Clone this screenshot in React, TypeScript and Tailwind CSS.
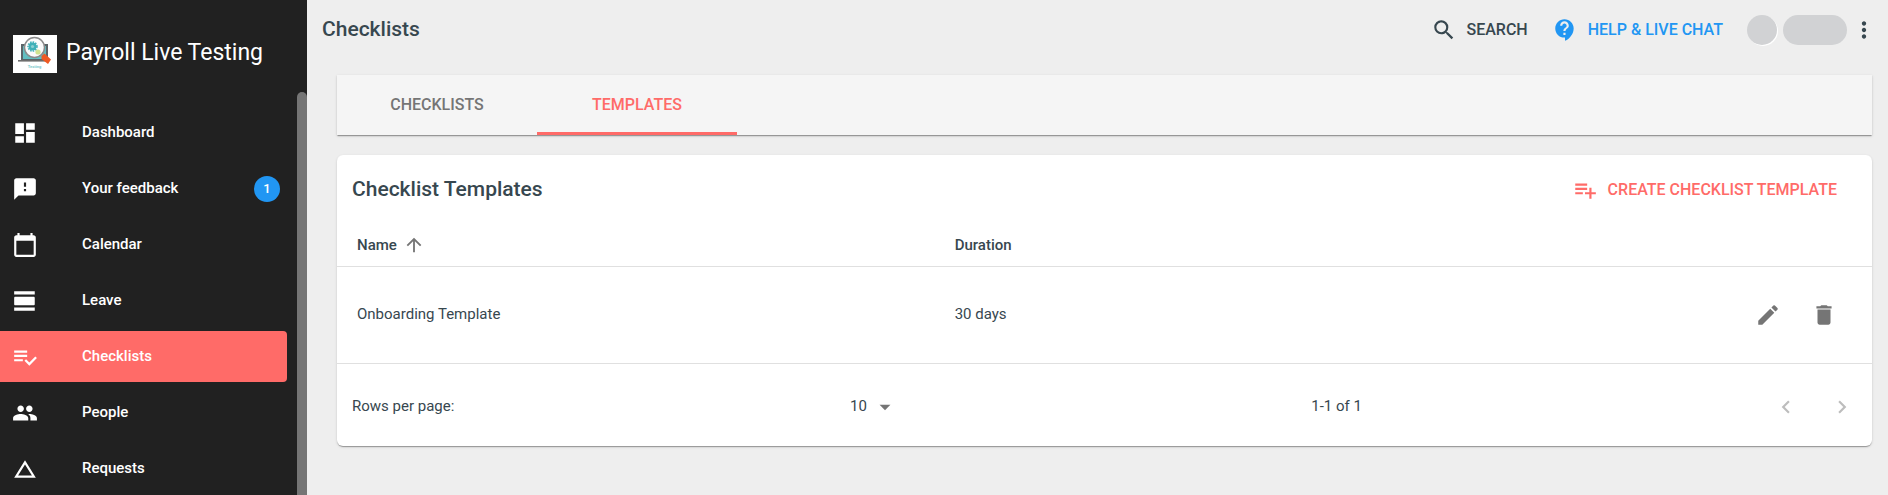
import type { ReactNode } from "react";
import type { IconType } from "react-icons";
import {
  MdArrowDropDown,
  MdArrowUpward,
  MdCalendarToday,
  MdChangeHistory,
  MdChevronLeft,
  MdChevronRight,
  MdContactSupport,
  MdDashboard,
  MdDelete,
  MdEdit,
  MdFeedback,
  MdMoreVert,
  MdPeople,
  MdPlaylistAdd,
  MdSearch,
  MdViewDay,
} from "react-icons/md";

function ChecklistIcon() {
  return (
    <svg viewBox="0 0 24 24" width="26" height="26" fill="currentColor" aria-hidden="true">
      <path d="M14 10H2v2h12v-2zm0-4H2v2h12V6zM2 16h8v-2H2v2zm19.5-4.5L23 13l-6.99 7-4.51-4.5L13 14l3.01 3 5.49-5.5z" />
    </svg>
  );
}

function Logo() {
  return (
    <svg viewBox="0 0 44 38" className="h-[38px] w-11 shrink-0" aria-hidden="true">
      <rect width="44" height="38" fill="#fff" />
      <path d="M8 9h27v16H8z" fill="#5b6468" />
      <path d="M10 11h23v13H10z" fill="#62bfc1" />
      <path d="M5 25h31v1.6H5z" fill="#6d6d6d" />
      <path d="M28.500 21l3-2.500 6.500 6-3 4.500-6.500-5z" fill="#ee5a24" />
      <circle cx="21.500" cy="12.500" r="10" fill="#fbfbfb" stroke="#8b8b8b" strokeWidth="1.500" />
      <circle cx="19.500" cy="11.500" r="4" fill="#3fb0b8" />
      <circle cx="19.500" cy="11.500" r="4.500" fill="none" stroke="#3fb0b8" strokeWidth="1.500" strokeDasharray="1.500 1.100" />
      <circle cx="19.500" cy="11.500" r="1.600" fill="#8ad0d2" />
      <circle cx="25" cy="17" r="2.600" fill="#cfe38f" />
      <text x="21.500" y="33" textAnchor="middle" fontSize="4" fontWeight="700" fill="#7cc9cc">
        Testing
      </text>
    </svg>
  );
}

type NavEntry = { label: string; icon: ReactNode; active?: boolean; badge?: number };

const glyph = (Icon: IconType) => <Icon size={26} />;

const navEntries: NavEntry[] = [
  { label: "Dashboard", icon: glyph(MdDashboard) },
  { label: "Your feedback", icon: glyph(MdFeedback), badge: 1 },
  { label: "Calendar", icon: glyph(MdCalendarToday) },
  { label: "Leave", icon: glyph(MdViewDay) },
  { label: "Checklists", icon: <ChecklistIcon />, active: true },
  { label: "People", icon: glyph(MdPeople) },
  { label: "Requests", icon: glyph(MdChangeHistory) },
];

function Sidebar() {
  return (
    <aside className="flex w-[307px] shrink-0 flex-col bg-[#212121] text-white">
      <div className="flex h-[92px] items-center gap-[9px] px-[13px] pt-4">
        <Logo />
        <span className="pb-[2px] text-[23px]">Payroll Live Testing</span>
      </div>
      <div className="flex grow">
        <nav className="grow pt-[15px] pr-[10px]">
          <ul className="flex flex-col gap-[5px]">
            {navEntries.map((entry) => (
              <li key={entry.label}>
                <a
                  href="#"
                  aria-current={entry.active ? "page" : undefined}
                  className={
                    entry.active
                      ? "flex h-[51px] items-center rounded-r bg-[#ff6b68] pr-[7px] pl-3 text-[15px] font-medium"
                      : "flex h-[51px] items-center pr-[7px] pl-3 text-[15px] font-medium"
                  }
                >
                  {entry.icon}
                  <span className="grow pl-11">{entry.label}</span>
                  {entry.badge && (
                    <span className="flex size-[26px] items-center justify-center rounded-full bg-[#2196f3] text-[13px]">
                      {entry.badge}
                    </span>
                  )}
                </a>
              </li>
            ))}
          </ul>
        </nav>
        <div className="w-[10px] rounded-t-full bg-[#757575]" />
      </div>
    </aside>
  );
}

function TopBar() {
  return (
    <header className="flex h-[60px] items-center justify-between pr-[11px] pl-[15px]">
      <h1 className="text-[21px] font-medium">Checklists</h1>
      <div className="flex items-center text-base font-medium">
        <button type="button" className="flex items-center gap-[10px]">
          <MdSearch size={26} />
          SEARCH
        </button>
        <button type="button" className="ml-6 flex items-center gap-[10px] text-[#2196f3]">
          <MdContactSupport size={26} />
          HELP &amp; LIVE CHAT
        </button>
        <span className="ml-6 size-[30px] rounded-full bg-[#d1d2d4] shadow-[1px_1px_0_#fff]" />
        <span className="ml-[6px] h-[30px] w-16 rounded-full bg-[#d1d2d4]" />
        <button type="button" aria-label="More options" className="ml-1">
          <MdMoreVert size={26} />
        </button>
      </div>
    </header>
  );
}

function Tabs() {
  return (
    <div
      role="tablist"
      className="flex h-[60px] bg-[#f5f5f5] text-base font-medium shadow-[0_2px_1px_-1px_rgba(0,0,0,0.2),0_1px_1px_0_rgba(0,0,0,0.14),0_1px_3px_0_rgba(0,0,0,0.12)]"
    >
      <button type="button" role="tab" aria-selected="false" className="w-[200px] text-[#757575]">
        CHECKLISTS
      </button>
      <button
        type="button"
        role="tab"
        aria-selected="true"
        className="w-[200px] border-y-3 border-t-transparent border-b-[#ff6b68] text-[#ff6b68]"
      >
        TEMPLATES
      </button>
    </div>
  );
}

function TemplatesCard() {
  return (
    <section className="rounded-md bg-white shadow-[0_2px_1px_-1px_rgba(0,0,0,0.2),0_1px_1px_0_rgba(0,0,0,0.14),0_1px_3px_0_rgba(0,0,0,0.12)]">
      <div className="flex h-[70px] items-center justify-between pr-[35px] pl-[15px]">
        <h2 className="text-[21px] font-medium">Checklist Templates</h2>
        <button type="button" className="flex items-center gap-[10px] text-base font-medium text-[#ff6b68]">
          <MdPlaylistAdd size={26} />
          CREATE CHECKLIST TEMPLATE
        </button>
      </div>
      <table className="w-full table-fixed text-left text-[15px]">
        <thead>
          <tr className="h-[41px] border-b border-[#e0e0e0]">
            <th scope="col" aria-sort="ascending" className="w-[39%] px-5 font-medium">
              <button type="button" className="flex items-center gap-[6px]">
                Name
                <MdArrowUpward size={22} className="text-[#757575]" />
              </button>
            </th>
            <th scope="col" className="px-[19px] font-medium">
              Duration
            </th>
            <th scope="col" aria-label="Actions" />
          </tr>
        </thead>
        <tbody>
          <tr className="h-[97px] border-b border-[#e0e0e0]">
            <td className="px-5">Onboarding Template</td>
            <td className="px-[19px]">30 days</td>
            <td className="pr-[35px]">
              <div className="flex justify-end gap-[30px] text-[#757575]">
                <button type="button" aria-label="Edit template">
                  <MdEdit size={26} />
                </button>
                <button type="button" aria-label="Delete template">
                  <MdDelete size={26} />
                </button>
              </div>
            </td>
          </tr>
        </tbody>
      </table>
      <div className="grid h-[82px] grid-cols-[33%_46fr_54fr] items-center pt-1 pr-[17px] pl-[15px] text-[15px]">
        <label htmlFor="rows-per-page">Rows per page:</label>
        <span className="flex items-center pl-[2px]">
          <select id="rows-per-page" defaultValue="10" className="w-[22px] appearance-none">
            <option value="10">10</option>
            <option value="25">25</option>
            <option value="50">50</option>
          </select>
          <MdArrowDropDown size={26} className="pointer-events-none text-[#757575]" />
        </span>
        <div className="flex items-center justify-between">
          <span>1-1 of 1</span>
          <span className="flex gap-[30px] text-[#bdbdbd]">
            <button type="button" aria-label="Previous page" disabled>
              <MdChevronLeft size={26} />
            </button>
            <button type="button" aria-label="Next page" disabled>
              <MdChevronRight size={26} />
            </button>
          </span>
        </div>
      </div>
    </section>
  );
}

export default function App() {
  return (
    <div className="flex min-h-screen bg-[#eeeeee] font-[Roboto,sans-serif] text-[#37474f]">
      <Sidebar />
      <main className="min-w-0 grow">
        <TopBar />
        <div className="flex flex-col gap-5 pt-[15px] pr-4 pl-[30px]">
          <Tabs />
          <TemplatesCard />
        </div>
      </main>
    </div>
  );
}
